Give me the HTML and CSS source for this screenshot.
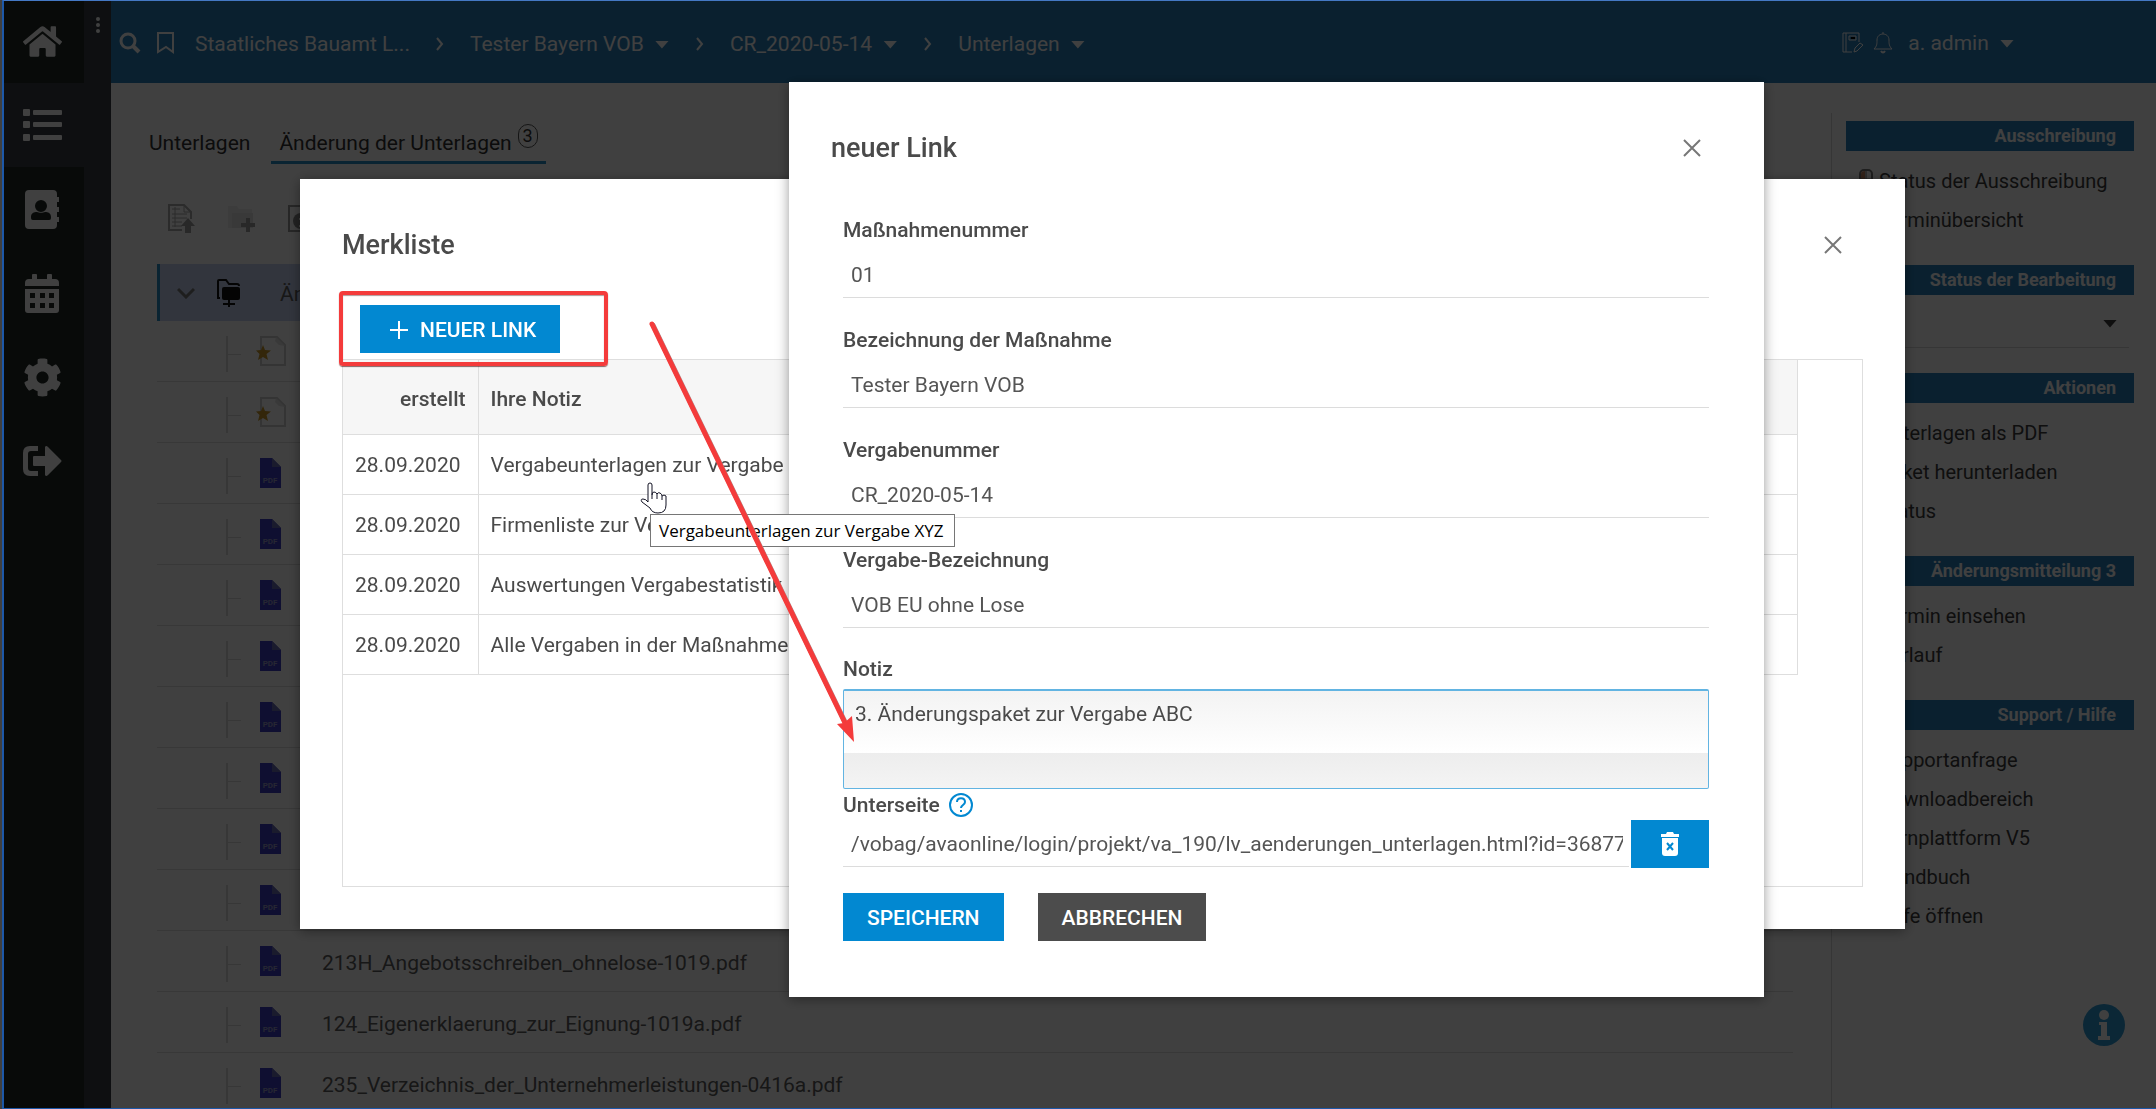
FILE: index.html
```html
<!DOCTYPE html>
<html lang="de">
<head>
<meta charset="utf-8">
<title>Änderung der Unterlagen</title>
<meta name="viewport" content="width=device-width, initial-scale=1">
<link rel="stylesheet" href="styles.css">
</head>
<body>
<svg class="sprite" aria-hidden="true">
  <symbol id="pdf" viewBox="0 0 21 30"><path d="M0 0h12l9 9v21H0z" fill="#3c3fc4"/><path d="M12 0l9 9h-9z" fill="#6a6cb4"/><text x="10" y="25" text-anchor="middle" class="pdf-text">PDF</text></symbol>
  <symbol id="star-page" viewBox="0 0 30 30"><path d="M5 1h16l8 8v20H5z" fill="none" stroke="#cfcfcf" stroke-width="2"/><path d="M20 1l9 9-6-1-4-4z" fill="#e2e2e2"/><path d="M7 9l2 5 6 .5-4.500 3.500 1.500 6-5-3-5 3 1.500-6L0 14.500 5 14z" fill="#c9982a"/></symbol>
  <symbol id="close" viewBox="0 0 18 18"><path d="M1 1l16 16M17 1L1 17" stroke="#777" stroke-width="2" fill="none"/></symbol>
</svg>

<div class="app">
  <nav class="rail" aria-label="Hauptnavigation">
    <a href="#" class="rail-item" aria-label="Start"><svg width="39" height="35" viewBox="0 0 576 512"><path d="M280.370 148.260L96 300.110V464a16 16 0 0 0 16 16l112.060-.29a16 16 0 0 0 15.920-16V368a16 16 0 0 1 16-16h64a16 16 0 0 1 16 16v95.640a16 16 0 0 0 16 16.050L464 480a16 16 0 0 0 16-16V300L295.670 148.260a12.190 12.190 0 0 0-15.300 0zM571.600 251.470L488 182.560V44.050a12 12 0 0 0-12-12h-56a12 12 0 0 0-12 12v72.610L318.470 43a48 48 0 0 0-61 0L4.340 251.470a12 12 0 0 0-1.600 16.900l25.500 31A12 12 0 0 0 45.150 301l235.220-193.740a12.190 12.190 0 0 1 15.300 0L530.900 301a12 12 0 0 0 16.900-1.600l25.500-31a12 12 0 0 0-1.700-16.930z"/></svg></a>
    <a href="#" class="rail-item rail-item-active" aria-label="Liste"><svg width="39" height="32" viewBox="0 0 39 32"><rect y="0" width="7" height="7" rx="1"/><rect y="12" width="7" height="7" rx="1"/><rect y="25" width="7" height="7" rx="1"/><rect x="10" y="1" width="29" height="5" rx="1"/><rect x="10" y="13" width="29" height="5" rx="1"/><rect x="10" y="26" width="29" height="5" rx="1"/></svg></a>
    <a href="#" class="rail-item" aria-label="Adressbuch"><svg width="35" height="39" viewBox="0 0 35 39"><path fill-rule="evenodd" d="M4 0h24a4 4 0 0 1 4 4v3h2v5h-2v5h2v5h-2v5h2v5h-2v3a4 4 0 0 1-4 4H4a4 4 0 0 1-4-4V4a4 4 0 0 1 4-4zM16 10a6 6 0 1 0 0 12 6 6 0 0 0 0-12zM6 27c0 3 1 3 3 3h14c2 0 3 0 3-3 0-4-3-5-6-5-2 1-6 1-8 0-3 0-6 1-6 5z"/></svg></a>
    <a href="#" class="rail-item" aria-label="Kalender"><svg width="34" height="39" viewBox="0 0 34 39"><path fill-rule="evenodd" d="M7 5V1q0-1 1-1h3q1 0 1 1v4h10V1q0-1 1-1h3q1 0 1 1v4h3a4 4 0 0 1 4 4v3H0V9a4 4 0 0 1 4-4zM0 15h34v21a3 3 0 0 1-3 3H3a3 3 0 0 1-3-3zM5 19v5h5v-5zM15 19v5h5v-5zM24 19v5h5v-5zM5 29v5h5v-5zM15 29v5h5v-5zM24 29v5h5v-5z"/></svg></a>
    <a href="#" class="rail-item" aria-label="Einstellungen"><svg width="39" height="39" viewBox="0 0 512 512"><path d="M487.400 315.700l-42.600-24.600c4.300-23.200 4.300-47 0-70.200l42.600-24.600c4.900-2.800 7.100-8.600 5.500-14-11.100-35.600-30-67.800-54.700-94.600-3.800-4.100-10-5.100-14.800-2.300L380.800 110c-17.900-15.400-38.500-27.300-60.800-35.100V25.800c0-5.600-3.900-10.500-9.400-11.700-36.700-8.200-74.300-7.800-109.200 0-5.500 1.200-9.400 6.100-9.400 11.700V75c-22.200 7.900-42.800 19.800-60.800 35.100L88.700 85.500c-4.900-2.800-11-1.900-14.800 2.300-24.700 26.700-43.600 58.900-54.700 94.600-1.700 5.400.6 11.200 5.500 14L67.300 221c-4.300 23.200-4.300 47 0 70.200l-42.600 24.600c-4.900 2.800-7.100 8.600-5.500 14 11.100 35.600 30 67.800 54.700 94.600 3.800 4.100 10 5.100 14.800 2.300l42.600-24.600c17.900 15.400 38.500 27.300 60.800 35.100v49.200c0 5.600 3.900 10.500 9.400 11.700 36.700 8.200 74.300 7.800 109.200 0 5.500-1.200 9.400-6.100 9.400-11.700v-49.200c22.200-7.900 42.800-19.800 60.800-35.100l42.600 24.600c4.900 2.800 11 1.900 14.800-2.300 24.700-26.700 43.600-58.900 54.700-94.600 1.500-5.500-.7-11.300-5.600-14.100zM256 336c-44.100 0-80-35.900-80-80s35.900-80 80-80 80 35.900 80 80-35.900 80-80 80z"/></svg></a>
    <a href="#" class="rail-item" aria-label="Abmelden"><svg width="39" height="30" viewBox="0 0 39 30"><path d="M15 0v5H8q-3 0-3 3v14q0 3 3 3h7v5H7q-7 0-7-7V7q0-7 7-7z"/><path d="M11 10h11V1q1-2 3 0l13 13q1 1 0 2L25 29q-2 2-3 0v-9H11q-1 0-1-1v-8q0-1 1-1z"/></svg></a>
  </nav>

  <div class="strip"><button type="button" class="icon-button" aria-label="Menü"><svg width="4" height="18" viewBox="0 0 4 18" fill="#fff"><circle cx="2" cy="3" r="2"/><circle cx="2" cy="9" r="2"/><circle cx="2" cy="15" r="2"/></svg></button></div>

  <div class="page">
    <header class="topbar">
      <button type="button" class="icon-button" aria-label="Suche"><svg width="22" height="22" viewBox="0 0 22 22" fill="none" stroke="#fff"><circle cx="9" cy="9" r="7" stroke-width="3"/><path d="M14 14l6 6" stroke-width="4"/></svg></button>
      <button type="button" class="icon-button bookmark" aria-label="Lesezeichen"><svg width="17" height="22" viewBox="0 0 17 22" fill="none" stroke="#fff" stroke-width="2"><path d="M1 1h15v19l-7-5-8 5z"/></svg></button>
      <nav class="crumbs" aria-label="Pfad">
        <a href="#">Staatliches Bauamt L...</a>
        <svg class="sep" width="8" height="14" viewBox="0 0 8 14"><path d="M1 1l5 6-5 6"/></svg>
        <a href="#">Tester Bayern VOB <i class="caret"></i></a>
        <svg class="sep" width="8" height="14" viewBox="0 0 8 14"><path d="M1 1l5 6-5 6"/></svg>
        <a href="#">CR_2020-05-14 <i class="caret"></i></a>
        <svg class="sep" width="8" height="14" viewBox="0 0 8 14"><path d="M1 1l5 6-5 6"/></svg>
        <a href="#">Unterlagen <i class="caret"></i></a>
      </nav>
      <div class="account">
        <button type="button" class="icon-button" aria-label="Notizen"><svg width="21" height="22" viewBox="0 0 21 22" fill="none" stroke="#fff"><path d="M17 10V1H1v19h9M4 1v19"/><path d="M7 4h7v4H7z"/><path d="M9 6h4" stroke="#000" stroke-width="2"/><path d="M12 20l1-4 5-5 3 2-6 6z"/></svg></button>
        <button type="button" class="icon-button" aria-label="Mitteilungen"><svg width="20" height="22" viewBox="0 0 20 22" fill="none" stroke="#fff" stroke-width="1"><path d="M10 0v2M1 17c3-3 3-5 3-9 0-4 3-6 6-6s6 2 6 6c0 4 0 6 3 9z"/><path d="M8 19q2 3 4 0" stroke-width="2"/></svg></button>
        <a href="#">a. admin <i class="caret"></i></a>
      </div>
    </header>

    <div class="body">
      <main class="content">
        <nav class="tabs" aria-label="Ansichten">
          <a href="#">Unterlagen</a>
          <a href="#" class="tab-active">Änderung der Unterlagen <span class="count">3</span></a>
        </nav>
        <div class="toolbar">
          <button type="button" class="icon-button" aria-label="Dokument hochladen"><svg width="27" height="29" viewBox="0 0 27 29" fill="none" stroke="#aaa"><path d="M14 26H1V1h15l7 7v7" stroke-width="2"/><path d="M16 1v7h7M4 5h8M4 10h15M4 14h15M4 18h10M4 22h10M7 3v20"/><path d="M20 14l7 8h-4v7h-6v-7h-4z" fill="#a0a0a0" stroke="none"/></svg></button>
          <button type="button" class="icon-button" aria-label="Ordner anlegen"><svg width="27" height="27" viewBox="0 0 27 27"><path d="M0 1h9l2 3h13v4H4v15H0z" fill="#f0f0f0"/><path d="M4 8h21v15H4z" fill="#e4e4e4"/><path d="M18 13h4v5h5v4h-5v5h-4v-5h-5v-4h5z" fill="#a0a0a0"/></svg></button>
          <button type="button" class="icon-button" aria-label="Information"><svg width="27" height="27" viewBox="0 0 27 27"><path d="M1 1h24v25H1z" fill="none" stroke="#999" stroke-width="2"/><circle cx="13" cy="16" r="8" fill="#888"/><path d="M11 14h3v7M11 21h6M12 11h2" fill="none" stroke="#fff" stroke-width="2"/></svg></button>
        </div>
        <ul class="tree">
          <li class="tree-root"><svg class="chevron" width="18" height="12" viewBox="0 0 18 12" fill="none" stroke="#777" stroke-width="3"><path d="M1 2l8 8 8-8"/></svg><svg width="24" height="28" viewBox="0 0 24 28"><path d="M3 19H1V2q0-1 1-1h7l3 4h8q2 0 2 2" fill="none" stroke="#111" stroke-width="2"/><rect x="5" y="8" width="18" height="13" rx="2" fill="#111"/><path d="M11 21h2v3h5v2h-5v2h-2v-2H6v-2h5z" fill="#111"/></svg><span class="tree-label">Änderungsmitteilung 3</span></li>
          <li class="leaf"><svg class="star" width="30" height="30"><use href="#star-page"/></svg></li>
          <li class="leaf"><svg class="star" width="30" height="30"><use href="#star-page"/></svg></li>
          <li class="leaf"><svg width="21" height="30"><use href="#pdf"/></svg></li>
          <li class="leaf"><svg width="21" height="30"><use href="#pdf"/></svg></li>
          <li class="leaf"><svg width="21" height="30"><use href="#pdf"/></svg></li>
          <li class="leaf"><svg width="21" height="30"><use href="#pdf"/></svg></li>
          <li class="leaf"><svg width="21" height="30"><use href="#pdf"/></svg></li>
          <li class="leaf"><svg width="21" height="30"><use href="#pdf"/></svg></li>
          <li class="leaf"><svg width="21" height="30"><use href="#pdf"/></svg></li>
          <li class="leaf"><svg width="21" height="30"><use href="#pdf"/></svg></li>
          <li class="leaf"><svg width="21" height="30"><use href="#pdf"/></svg><a href="#">213H_Angebotsschreiben_ohnelose-1019.pdf</a></li>
          <li class="leaf"><svg width="21" height="30"><use href="#pdf"/></svg><a href="#">124_Eigenerklaerung_zur_Eignung-1019a.pdf</a></li>
          <li class="leaf"><svg width="21" height="30"><use href="#pdf"/></svg><a href="#">235_Verzeichnis_der_Unternehmerleistungen-0416a.pdf</a></li>
        </ul>
      </main>

      <aside class="side">
        <section>
          <h2>Ausschreibung</h2>
          <ul>
            <li><svg class="mouse" width="14" height="24" viewBox="0 0 14 24"><rect x="1" y="1" width="12" height="22" rx="4" fill="none" stroke="#777" stroke-width="2"/><path d="M2 10V5q0-3 4-3v8z" fill="#c98a66"/><path d="M7 1v9M1 10h12" stroke="#777"/></svg><a href="#">Status der Ausschreibung</a></li>
            <li><a href="#">Terminübersicht</a></li>
          </ul>
        </section>
        <section>
          <h2>Status der Bearbeitung</h2>
          <div class="status"><select aria-label="Status der Bearbeitung"><option></option></select><i class="caret"></i></div>
        </section>
        <section>
          <h2>Aktionen</h2>
          <ul>
            <li><a href="#">Unterlagen als PDF</a></li>
            <li><a href="#">Paket herunterladen</a></li>
            <li><a href="#">Status</a></li>
          </ul>
        </section>
        <section>
          <h2>Änderungsmitteilung 3</h2>
          <ul>
            <li><a href="#">Termin einsehen</a></li>
            <li><a href="#">Verlauf</a></li>
          </ul>
        </section>
        <section>
          <h2>Support / Hilfe</h2>
          <ul>
            <li><a href="#">Supportanfrage</a></li>
            <li><a href="#">Downloadbereich</a></li>
            <li><a href="#">Lernplattform V5</a></li>
            <li><a href="#">Handbuch</a></li>
            <li><a href="#">Hilfe öffnen</a></li>
          </ul>
        </section>
      </aside>
    </div>
  </div>
  <button type="button" class="icon-button info" aria-label="Hilfe"><svg width="42" height="42" viewBox="0 0 42 42"><circle cx="21" cy="21" r="21" fill="#2e9bd6"/><g fill="#fff"><circle cx="21" cy="11" r="5"/><path d="M16 18h8v14h3v4H15v-4h3V21h-2z"/></g></svg></button>
</div>

<div class="overlay"></div>

<section class="dialog list-dialog" role="dialog" aria-labelledby="list-title">
  <header class="dialog-head">
    <h1 id="list-title">Merkliste</h1>
    <button type="button" class="icon-button" aria-label="Schließen"><svg width="18" height="18"><use href="#close"/></svg></button>
  </header>
  <div class="new-link">
    <button type="button" class="btn btn-primary"><svg width="20" height="20" viewBox="0 0 20 20"><path d="M10 1v18M1 10h18" stroke="#fff" stroke-width="2"/></svg>NEUER LINK</button>
    <span class="highlight"></span>
  </div>
  <div class="grid-frame">
    <table class="notes">
      <thead><tr><th class="date">erstellt</th><th>Ihre Notiz</th></tr></thead>
      <tbody>
        <tr><td class="date">28.09.2020</td><td>Vergabeunterlagen zur Vergabe XYZ</td></tr>
        <tr><td class="date">28.09.2020</td><td>Firmenliste zur Vergabe</td></tr>
        <tr><td class="date">28.09.2020</td><td>Auswertungen Vergabestatistik</td></tr>
        <tr><td class="date">28.09.2020</td><td>Alle Vergaben in der Maßnahme</td></tr>
      </tbody>
    </table>
  </div>
</section>

<section class="dialog link-dialog" role="dialog" aria-labelledby="link-title">
  <header class="dialog-head">
    <h1 id="link-title">neuer Link</h1>
    <button type="button" class="icon-button" aria-label="Schließen"><svg width="18" height="18"><use href="#close"/></svg></button>
  </header>
  <form class="link-form">
    <div class="field"><label for="nr">Maßnahmenummer</label><input id="nr" type="text" value="01"></div>
    <div class="field"><label for="name">Bezeichnung der Maßnahme</label><input id="name" type="text" value="Tester Bayern VOB"></div>
    <div class="field"><label for="vnr">Vergabenummer</label><input id="vnr" type="text" value="CR_2020-05-14"></div>
    <div class="field"><label for="vname">Vergabe-Bezeichnung</label><input id="vname" type="text" value="VOB EU ohne Lose"></div>
    <div class="note"><label for="note">Notiz</label><textarea id="note">3. Änderungspaket zur Vergabe ABC</textarea></div>
    <div class="sub-label"><label for="path">Unterseite</label><svg width="26" height="26" viewBox="0 0 26 26" fill="none" stroke="#0288d1" stroke-width="2"><circle cx="13" cy="13" r="11"/><path d="M9 10c0-5 8-5 8 0 0 3-4 3-4 6" /><path d="M13 18v2"/></svg></div>
    <div class="sub-row"><input id="path" type="text" value="/vobag/avaonline/login/projekt/va_190/lv_aenderungen_unterlagen.html?id=36877"><button type="button" class="btn btn-primary" aria-label="Löschen"><svg width="18" height="24" viewBox="0 0 18 24"><path d="M0 2h5l1-2h6l1 2h5v3H0z" fill="#fff"/><path d="M1 6h16v15q0 3-3 3H4q-3 0-3-3z" fill="#fff"/><path d="M6 11l6 7M12 11l-6 7" stroke="#0288d1" stroke-width="2"/></svg></button></div>
    <div class="actions"><button type="submit" class="btn btn-primary">SPEICHERN</button><button type="button" class="btn btn-dark">ABBRECHEN</button></div>
  </form>
</section>

<div class="tooltip" role="tooltip">Vergabeunterlagen zur Vergabe XYZ</div>
<svg class="cursor" width="27" height="33" viewBox="0 0 27 33"><path d="M8 20V3q0-2 2-2t2 2v10q0-3 2-3t3 2q1-2 3-1t2 3q2-2 4 0v9q0 8-8 8-6 0-8-5L2 20q-2-3 1-3t5 3zM12 13v4M17 12v5M22 14v4" fill="#fff" stroke="#112" stroke-width="1"/></svg>
<svg class="arrow" width="212" height="426" viewBox="0 0 212 426"><path d="M4 5L198 406" stroke="#b08c8c" stroke-width="5" stroke-linecap="round"/><path d="M3 4L197 405" stroke="#f43b3b" stroke-width="5" stroke-linecap="round"/><path d="M205 422l-17-18 7-1 8-7z" fill="#f43b3b"/></svg>
</body>
</html>
```
FILE: styles.css
```css
* { box-sizing: border-box; }

body {
  margin: 0;
  height: 100vh;
  overflow: hidden;
  background: #fff;
  color: #4a4a4a;
  font: 21px/24px Roboto, "Liberation Sans", sans-serif;
}

body::after {
  content: "";
  position: fixed;
  inset: 0 0 0 2px;
  border: solid #1d58a8;
  border-width: 1px 0 1px 2px;
  border-top-color: #4478c4;
  pointer-events: none;
}

a { color: inherit; text-decoration: none; }
h1, h2, ul { margin: 0; padding: 0; }
ul { list-style: none; }
svg { display: block; flex: none; }
.sprite { position: absolute; width: 0; height: 0; }

.icon-button {
  display: block;
  flex: none;
  padding: 0;
  border: 0;
  background: none;
  cursor: pointer;
}

.caret {
  display: inline-block;
  width: 14px;
  height: 8px;
  background: currentColor;
  clip-path: polygon(0 0, 100% 0, 50% 100%);
}

/* Application frame */
.app {
  display: flex;
  height: 100vh;
  margin-left: 4px;
  overflow: hidden;
}

.rail { flex: none; width: 80px; background: #202a26; }
.rail-item {
  display: flex;
  align-items: center;
  justify-content: center;
  height: 84px;
  padding-right: 4px;
  fill: #fff;
}
.rail-item:first-child { height: 83px; }
.rail-item-active { background: #383e44; }

.strip {
  display: flex;
  flex: none;
  align-items: flex-start;
  justify-content: center;
  width: 27px;
  padding-top: 16px;
  background: #383e44;
}

.page { display: flex; flex: 1; flex-direction: column; min-width: 0; }

.topbar {
  display: flex;
  flex: none;
  align-items: center;
  height: 83px;
  padding: 2px 142px 0 8px;
  background: #2880bc;
  color: #fff;
}
.bookmark { margin-left: 16px; }
.crumbs { display: flex; align-items: center; margin-left: 21px; padding-top: 2px; gap: 26px; }
.crumbs .caret { margin: 0 1px 0 6px; vertical-align: 2px; }
.sep { fill: none; stroke: #fff; stroke-width: 2; }
.account { display: flex; align-items: center; gap: 10px; margin-left: auto; }
.account a { margin-left: 5px; }
.account .caret { margin-left: 6px; vertical-align: 2px; }

.body { display: flex; flex: 1; min-height: 0; padding: 38px 22px 0 0; }
.content { flex: 1; padding: 0 38px; }

.tabs { display: flex; gap: 21px; color: #333; }
.tabs a { height: 43px; padding: 10px 0 0; }
.tabs .tab-active {
  display: flex;
  gap: 6px;
  padding: 10px 8px 0;
  border-bottom: 3px solid #2890c8;
}
.count {
  width: 20px;
  height: 24px;
  margin-top: -7px;
  border: 1px solid #555;
  border-radius: 10px;
  font-size: 18px;
  line-height: 22px;
  text-align: center;
}

.toolbar { display: flex; gap: 33px; height: 29px; margin: 40px 0 31px 19px; }

.tree { margin-left: 8px; color: #5c5c5c; }
.tree-root {
  display: flex;
  align-items: center;
  gap: 22px;
  height: 57px;
  padding-left: 17px;
  border-left: 3px solid #2890c8;
  background: #c6d2f2;
}
.tree-label { margin-left: 17px; padding-top: 3px; }
.leaf {
  display: flex;
  align-items: center;
  gap: 41px;
  height: 61px;
  padding-left: 103px;
  border-bottom: 1px solid #dedede;
  background:
    linear-gradient(#dcdcdc, #dcdcdc) 69px 15px / 2px 36px no-repeat,
    linear-gradient(#dcdcdc, #dcdcdc) 71px 33px / 13px 1px no-repeat;
}
.leaf a { padding-top: 3px; }
.leaf .star { margin-left: -4px; }
.pdf-text { fill: #9a9ac8; font: 700 8px Roboto, sans-serif; }

.side {
  flex: none;
  width: 303px;
  margin-top: -8px;
  padding: 8px 0 0 14px;
  border-left: 1px solid #d8d8d8;
  color: #3c3c3c;
  font-size: 20px;
}
.side h2 {
  height: 30px;
  padding-right: 18px;
  background: #2880bc;
  color: #fff;
  font-size: 18px;
  font-weight: 700;
  line-height: 30px;
  text-align: right;
}
.side ul { padding: 10px 0 26px 33px; }
.side li { display: flex; align-items: center; height: 39px; }
.mouse { margin: 0 6px 0 -20px; }
.status {
  display: flex;
  align-items: center;
  height: 53px;
  margin: 0 5px 25px 13px;
  padding: 5px 12px 0 0;
  border-bottom: 1px solid #d8d8d8;
}
.status select { flex: 1; min-width: 0; border: 0; background: none; appearance: none; }

.info { position: fixed; right: 31px; bottom: 63px; }

.overlay { position: fixed; inset: 0; background: rgba(0, 0, 0, .75); }

/* Dialogs */
.dialog {
  position: fixed;
  display: flex;
  flex-direction: column;
  background: #fff;
  box-shadow: 0 2px 12px rgba(0, 0, 0, .4);
}
.list-dialog { top: 179px; right: 251px; bottom: 180px; left: 300px; padding: 48px 42px 42px; }
.link-dialog { top: 82px; right: 392px; left: 789px; padding: 48px 55px 56px 54px; }

.dialog-head { display: flex; align-items: center; justify-content: space-between; }
.dialog-head h1 { font-size: 27px; font-weight: 500; line-height: 36px; }
.list-dialog .dialog-head { padding-right: 21px; }
.link-dialog .dialog-head { margin: 0 8px 52px -12px; }

.btn {
  display: flex;
  align-items: center;
  justify-content: center;
  height: 48px;
  padding: 2px 24px 0;
  border: 0;
  color: #fff;
  font: 500 21px/24px Roboto, "Liberation Sans", sans-serif;
  white-space: nowrap;
  cursor: pointer;
}
.btn-primary { background: #0288d1; }
.btn-dark { background: #4c4c4c; }

.new-link { position: relative; margin: 42px 0 6px 18px; }
.new-link .btn { justify-content: flex-start; width: 200px; padding: 2px 0 0 29px; gap: 11px; }
.highlight {
  position: absolute;
  top: -14px;
  left: -21px;
  width: 269px;
  height: 75px;
  border: 4px solid #f43b3b;
  border-radius: 4px;
  box-shadow: 0 1px 1px rgba(60, 0, 0, .6), inset 0 1px 1px rgba(60, 0, 0, .4);
}

.grid-frame { flex: 1; padding-right: 64px; border: 1px solid #dedede; }
.notes { width: 100%; border-collapse: collapse; }
.notes th, .notes td {
  height: 60px;
  padding: 2px 12px 0;
  border: 1px solid #dedede;
  border-width: 0 1px 1px 0;
  text-align: left;
}
.notes th { height: 74px; padding-top: 4px; background: #f6f6f6; font-weight: 500; }
.notes .date { width: 135px; }
.notes th.date { text-align: right; }

.field { display: flex; flex-direction: column; gap: 11px; margin-bottom: 30px; }
label { font-weight: 500; }
.link-form input {
  width: 100%;
  height: 45px;
  padding: 0 6px 0 8px;
  border: 0;
  border-bottom: 1px solid #dcdcdc;
  background: none;
  color: #555;
  font: inherit;
}
.note { display: flex; flex-direction: column; gap: 8px; margin-top: -1px; }
.note textarea {
  height: 100px;
  padding: 11px;
  border: 1px solid #62b4e2;
  border-top-width: 2px;
  border-radius: 2px;
  background: linear-gradient(#f3f3f3, #fff 62px, #ededed 62px, #f4f4f4);
  color: #4a4a4a;
  font: inherit;
  resize: none;
  outline: 0;
}
.sub-label { display: flex; align-items: center; gap: 8px; margin-top: 3px; }
.sub-row { display: flex; gap: 2px; margin-top: 2px; }
.link-form .sub-row input { flex: 1; height: 47px; min-width: 0; padding-top: 2px; }
.sub-row .btn { width: 78px; padding-top: 0; }
.actions { display: flex; gap: 34px; margin-top: 25px; }

/* Pointer, tooltip and annotation arrow above the dialogs */
.tooltip {
  position: fixed;
  top: 514px;
  left: 650px;
  padding: 4px 10px 3px 8px;
  border: 1px solid #767676;
  background: #fff;
  color: #000;
  font: 17px/24px "Open Sans", "Noto Sans", sans-serif;
  white-space: nowrap;
}
.cursor { position: fixed; top: 482px; left: 640px; }
.arrow { position: fixed; top: 320px; left: 649px; pointer-events: none; }
```
